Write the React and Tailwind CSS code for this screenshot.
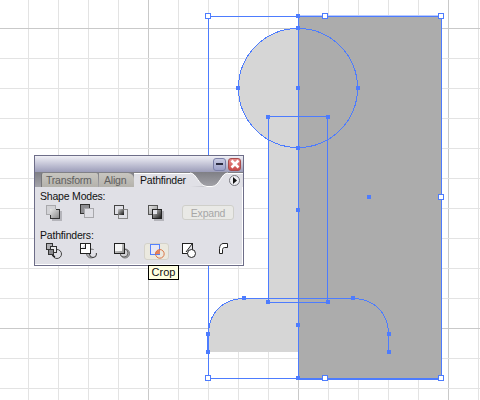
import React from "react";

const BLUE = "#4d7cfe";

// grid lines of the artboard, every 30px with a darker one every 150px
const verticals = [28, 58, 88, 118, 148, 178, 208, 238, 268, 298, 328, 358, 388, 418, 448, 478];
const horizontals = [28, 58, 88, 118, 148, 178, 208, 238, 268, 298, 328, 358, 388];
const darkV = [148, 298, 448];
const darkH = [28, 328];

const solidHandles = [
  [298, 16], [298, 28], [298, 88], [238, 88], [358, 88], [298, 148], [268, 117], [328, 117],
  [298, 210], [369, 197], [268, 302], [328, 302], [244, 298], [353, 298], [298, 325],
  [208, 334], [389, 334], [208, 352], [389, 352], [298, 378],
];
const whiteHandles = [[208, 16], [325, 16], [441, 16], [441, 197], [208, 378], [325, 378], [441, 378]];

function Artboard() {
  return (
    <svg className="absolute inset-0" width="480" height="400" shapeRendering="crispEdges">
      {verticals.map((x) => (
        <rect key={x} x={x} y="0" width="1" height="400" fill={darkV.includes(x) ? "#c9c9c9" : "#e3e3e3"} />
      ))}
      {horizontals.map((y) => (
        <rect key={y} x="0" y={y} width="480" height="1" fill={darkH.includes(y) ? "#c9c9c9" : "#e3e3e3"} />
      ))}

      {/* light shape */}
      <circle cx="298" cy="88" r="60" fill="#d6d6d6" />
      <rect x="268" y="117" width="60" height="186" fill="#d6d6d6" />
      <path d="M208 352V334C208 312 224 298 244 298H353C373 298 389 312 389 334V352Z" fill="#d6d6d6" />

      {/* dark rectangle */}
      <rect x="298" y="16" width="144" height="363" fill="#acacac" />

      {/* outlines */}
      <rect x="208.5" y="16.5" width="233" height="362" fill="none" stroke={BLUE} />
      <rect x="298" y="15" width="144" height="1" fill="#b9cbff" />
      <rect x="298" y="378" width="144" height="2" fill={BLUE} />
      <line x1="298.5" y1="16" x2="298.5" y2="378" stroke={BLUE} />
      <circle cx="298" cy="88" r="59.5" fill="none" stroke={BLUE} />
      <rect x="268.5" y="116.5" width="59" height="186" fill="none" stroke={BLUE} />
      <path
        d="M208.5 352V334C208.5 312 224 298.5 244 298.5H353C373 298.5 388.5 312 388.5 334V352"
        fill="none"
        stroke={BLUE}
      />
      <rect x="207" y="334" width="2" height="18" fill={BLUE} />

      {solidHandles.map(([x, y]) => (
        <rect key={`${x}-${y}`} x={x - 2} y={y - 2} width="4" height="4" fill={BLUE} />
      ))}
      {whiteHandles.map(([x, y]) => (
        <rect key={`${x}-${y}`} x={x - 2.5} y={y - 2.5} width="5" height="5" fill="#fff" stroke={BLUE} />
      ))}
    </svg>
  );
}

// small icons for the panel, drawn 4px in from the left of a 24x18 box
const sq = (x, y, s, fill, stroke) => <rect x={x + 0.5} y={y + 0.5} width={s} height={s} fill={fill} stroke={stroke} />;

function IconBox({ children }) {
  return (
    <svg width="24" height="18" viewBox="0 0 24 18" shapeRendering="crispEdges">
      <defs>
        <linearGradient id="gr" x1="0" y1="0" x2="1" y2="1">
          <stop offset="0" stopColor="#e8e8e8" />
          <stop offset="1" stopColor="#8a8a8a" />
        </linearGradient>
        <linearGradient id="bk" x1="0" y1="0" x2="1" y2="1">
          <stop offset="0" stopColor="#cfcfcf" />
          <stop offset="1" stopColor="#111" />
        </linearGradient>
      </defs>
      {children}
    </svg>
  );
}

const Shadow = ({ x, y, s }) => <rect x={x + 2} y={y + 2} width={s} height={s} fill="#b4b4ba" />;

const Unite = () => (
  <IconBox>
    <Shadow x={8} y={6} s={10} />
    {sq(4, 2, 9, "#d2d2d6", "#a8a8ac")}
    <rect x="8" y="6" width="9" height="9" fill="url(#gr)" />
    <path d="M8.5 11.5V15.5H17.5V6.5H13.5" fill="none" stroke="#333" />
  </IconBox>
);
const MinusFront = () => (
  <IconBox>
    {sq(4, 1, 9, "#8e8e92", "#333")}
    {sq(8, 5, 9, "#e0e0e6", "#a8a8ac")}
  </IconBox>
);
const Intersect = () => (
  <IconBox>
    {sq(4, 2, 9, "none", "#444")}
    {sq(8, 6, 9, "none", "#888")}
    <rect x="8" y="6" width="6" height="6" fill="url(#bk)" />
  </IconBox>
);
const Exclude = () => (
  <IconBox>
    <Shadow x={8} y={6} s={10} />
    {sq(4, 2, 9, "url(#gr)", "#555")}
    {sq(8, 6, 9, "url(#bk)", "#222")}
    <rect x="9" y="7" width="4" height="4" fill="#e0e0e6" />
  </IconBox>
);

const Ring = ({ cx, cy, r, fill = "none", stroke = "#444" }) => (
  <circle cx={cx} cy={cy} r={r} fill={fill} stroke={stroke} shapeRendering="auto" />
);

const Divide = () => (
  <IconBox>
    <Ring cx={15} cy={12} r={4.5} fill="#e0e0e6" />
    <path d="M10 10.5A5 5 0 0 0 13 15" stroke="#222" strokeWidth="1.5" fill="none" shapeRendering="auto" />
    {sq(4, 1, 6, "#b0b0b4", "#333")}
    {sq(8, 4, 6, "#e8e8ea", "#333")}
    {sq(6, 7, 5, "#8a8a8e", "#333")}
  </IconBox>
);
const Trim = () => (
  <IconBox>
    <Ring cx={15} cy={11.5} r={4.5} fill="#b0b0b5" stroke="#777" />
    <Ring cx={17} cy={12} r={3.5} fill="#e0e0e6" stroke="#333" />
    <rect x="14" y="8" width="7" height="3" fill="#e0e0e6" />
    <rect x="4" y="1" width="11" height="11" fill="#fff" />
    <path d="M4.5 1.5H14.5V11.5H4.5Z" fill="none" stroke="#222" />
    <path d="M9.5 1.5V6.5H4.5" fill="#e0e0e6" stroke="#222" />
  </IconBox>
);
const Merge = () => (
  <IconBox>
    <Ring cx={15} cy={11.5} r={4.5} fill="#b0b0b5" stroke="#777" />
    <Ring cx={14} cy={11} r={4} fill="#d0d0d4" stroke="#666" />
    <rect x="4" y="1" width="11" height="11" fill="url(#gr)" />
    <path d="M4.5 1.5H14.5V11.5H4.5Z" fill="none" stroke="#222" />
    <rect x="5" y="2" width="7" height="7" fill="#f6f6f6" />
  </IconBox>
);
const Crop = () => (
  <IconBox>
    {sq(5, 2, 10, "#e8e8f4", "#4d7cfe")}
    <path d="M15.5 8A5 5 0 0 0 10.5 12H15.5Z" fill="#e8825a" shapeRendering="auto" />
    <Ring cx={15.5} cy={12} r={4.5} stroke="#d9703f" />
  </IconBox>
);
const Outline = () => (
  <IconBox>
    {sq(4, 1, 10, "#fff", "#222")}
    <path d="M14 2 8 10H14Z" fill="#e0e0e6" shapeRendering="auto" />
    <path d="M14 2 8 10" stroke="#222" fill="none" shapeRendering="auto" />
    <Ring cx={13.5} cy={11.5} r={4} fill="#fff" stroke="#222" />
  </IconBox>
);
const MinusBack = () => (
  <IconBox>
    <path d="M7.5 11.5V6.5C7.5 4 9 1.5 11 1.5H15.5V5.5H12.5C11.5 5.5 10.5 6.5 10.5 7.5V11.5Z" fill="#fff" stroke="#222" shapeRendering="auto" />
  </IconBox>
);

function Cell({ children, active }) {
  return (
    <div className="w-[34px] flex justify-center items-center">
      {active ? (
        <div className="w-[25px] h-[17px] flex justify-center items-center rounded-[3px] bg-[#ebe9df] border border-[#d4d2ca]">
          {children}
        </div>
      ) : (
        children
      )}
    </div>
  );
}

function Panel() {
  return (
    <div className="absolute left-[34px] top-[155px] w-[210px] border border-[#6d6d88] shadow-[inset_-1px_-1px_0_#ffffff] bg-[#e0e0e6] text-[10.5px] tracking-[-0.2px] leading-[12px] text-[#111] font-['Liberation_Sans',sans-serif]">
      {/* title bar */}
      <div className="h-[16px] flex justify-end items-center gap-[2px] pr-[2px] bg-gradient-to-b from-[#f0f0f6] to-[#9c9db9]">
        <div className="w-[13px] h-[13px] rounded-[3px] border border-[#7c80a8] bg-gradient-to-b from-[#c9cbe2] to-[#9da1c9] flex items-center justify-center">
          <div className="w-[7px] h-[2px] bg-[#2b2b40]" />
        </div>
        <div className="w-[13px] h-[13px] rounded-[3px] border border-[#a84c4c] bg-gradient-to-b from-[#e88a8a] to-[#c94a4a] flex items-center justify-center">
          <svg width="10" height="10" viewBox="0 0 10 10">
            <path d="M1.5 1.5 8.5 8.5M8.5 1.5 1.5 8.5" stroke="#fff" strokeWidth="2.6" />
          </svg>
        </div>
      </div>

      {/* tabs */}
      <div className="h-[15px] flex items-end bg-gradient-to-b from-[#7f7f85] to-[#a4a4aa]">
        <div className="ml-[6px] w-[57px] h-[14px] rounded-t-[2px] border-l border-[#77777a] bg-gradient-to-b from-[#c8c6c0] to-[#b4b2ac] text-[#5f5f5f] pl-[4px] leading-[14px]">Transform</div>
        <div className="ml-[1px] w-[35px] h-[14px] rounded-tr-[6px] bg-gradient-to-b from-[#c8c6c0] to-[#b4b2ac] text-[#5f5f5f] pl-[5px] leading-[14px]">Align</div>
        <div className="w-[56px] h-[14px] bg-[#e0e0e6] border-t border-white pl-[6px] leading-[13px]">Pathfinder</div>
        <svg width="38" height="15" viewBox="0 0 38 15" className="shrink-0">
          <path d="M0 1C7 1 8 14 17 14.5L0 15Z" fill="#e0e0e6" />
          <path d="M38 1C31 1 30 14 22 14.5H17L22 15H38Z" fill="#e0e0e6" />
          <path d="M0 1C7 1 8 14 17 14.5H22C30 14 31 1 38 1" fill="none" stroke="#fff" />
        </svg>
        <div className="flex-1 h-[14px] bg-[#e0e0e6] border-t border-white flex items-center justify-start pl-[1px]">
          <div className="w-[11px] h-[11px] rounded-full border border-[#77777f] bg-[#eeeef2] flex items-center justify-center">
            <svg width="5" height="7" viewBox="0 0 5 7">
              <path d="M1 0 5 3.5 1 7Z" fill="#111" />
            </svg>
          </div>
        </div>
      </div>

      {/* body */}
      <div className="pl-[5px] pt-[3px] h-[78px]">
        <div className="h-[12px]">Shape Modes:</div>
        <div className="flex h-[18px] mt-[1px] -ml-[3px]">
          <Cell><Unite /></Cell>
          <Cell><MinusFront /></Cell>
          <Cell><Intersect /></Cell>
          <Cell><Exclude /></Cell>
          <div className="ml-[9px] w-[52px] h-[15px] mt-[2px] rounded-[3px] bg-[#e9e9e6] border border-[#cfcfca] text-[#a6a6a6] flex items-center justify-center">
            Expand
          </div>
        </div>
        <div className="h-[12px] mt-[8px]">Pathfinders:</div>
        <div className="flex h-[18px] mt-[1px] -ml-[3px]">
          <Cell><Divide /></Cell>
          <Cell><Trim /></Cell>
          <Cell><Merge /></Cell>
          <Cell active><Crop /></Cell>
          <Cell><Outline /></Cell>
          <Cell><MinusBack /></Cell>
        </div>
      </div>

      {/* tooltip */}
      <div className="absolute left-[113px] top-[109px] w-[31px] h-[15px] bg-[#ffffe1] border border-black text-[11px] tracking-normal leading-[13px] text-center">
        Crop
      </div>
    </div>
  );
}

export default function App() {
  return (
    <div className="relative w-[480px] h-[400px] overflow-hidden bg-white">
      <Artboard />
      <Panel />
    </div>
  );
}
